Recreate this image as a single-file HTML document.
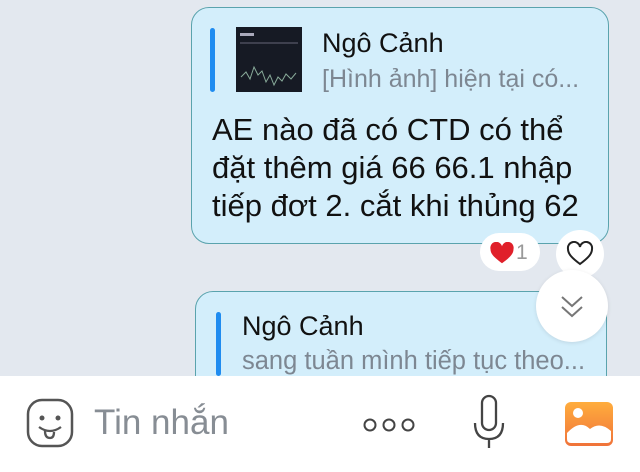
<!DOCTYPE html>
<html><head><meta charset="utf-8"><style>
body{margin:0;width:640px;height:472px;overflow:hidden;background:#e3e8ef;font-family:"Liberation Sans",sans-serif;position:relative}
.b{position:absolute;background:#d3eefb;border:1.5px solid #5aa3ad;border-radius:18px;box-sizing:border-box}
.bar{position:absolute;width:5px;background:#1f8cf0;border-radius:3px}
.t{position:absolute;white-space:nowrap}
</style></head><body>
<div class="b" style="left:191px;top:7px;width:418px;height:237px"></div>
<div class="bar" style="left:210px;top:28px;height:64px"></div>
<div style="position:absolute;left:236px;top:27px;width:66px;height:65px;background:#161a24">
<svg width="66" height="65"><polyline points="5,50 10,45 14,52 18,40 22,48 26,44 30,55 34,48 38,58 42,50 46,54 50,47 55,52 60,46" fill="none" stroke="#8a9" stroke-width="1"/><line x1="4" y1="16" x2="62" y2="16" stroke="#667" stroke-width="1"/><rect x="4" y="6" width="14" height="3" fill="#aab"/></svg></div>
<div class="t" style="left:322px;top:28px;font-size:27px;color:#111">Ngô Cảnh</div>
<div class="t" style="left:322px;top:65px;font-size:25px;color:#7d8792">[Hình ảnh] hiện tại có...</div>
<div class="t" style="left:212px;top:111px;font-size:31px;line-height:38px;color:#111">AE nào đã có CTD có thể<br>đặt thêm giá 66 66.1 nhập<br>tiếp đơt 2. cắt khi thủng 62</div>
<div style="position:absolute;left:480px;top:233px;width:60px;height:38px;border-radius:19px;background:#fff"></div>
<svg style="position:absolute;left:489px;top:242px" width="26" height="23" viewBox="0 0 28 26"><path d="M14 24 C6 18 1 14 1 8 A6.5 6.5 0 0 1 14 5 A6.5 6.5 0 0 1 27 8 C27 14 22 18 14 24Z" fill="#e0202a"/></svg>
<div class="t" style="left:516px;top:241px;font-size:21px;color:#999">1</div>
<div style="position:absolute;left:556px;top:230px;width:48px;height:48px;border-radius:24px;background:#fff"></div>
<svg style="position:absolute;left:566px;top:241px" width="28" height="26" viewBox="0 0 28 26"><path d="M14 23 C6 17 2 13 2 8 A6 6 0 0 1 14 6 A6 6 0 0 1 26 8 C26 13 22 17 14 23Z" fill="none" stroke="#222" stroke-width="2"/></svg>
<div class="b" style="left:195px;top:291px;width:412px;height:120px"></div>
<div class="bar" style="left:216px;top:312px;height:64px"></div>
<div class="t" style="left:242px;top:311px;font-size:27px;color:#111">Ngô Cảnh</div>
<div class="t" style="left:242px;top:347px;font-size:25.5px;color:#7d8792">sang tuần mình tiếp tục theo...</div>
<div style="position:absolute;left:536px;top:270px;width:72px;height:72px;border-radius:36px;background:#fff;box-shadow:0 1px 4px rgba(0,0,0,.1)"></div>
<svg style="position:absolute;left:558px;top:293px" width="28" height="28" viewBox="0 0 28 28"><path d="M4 4 L14 13 L24 4 M4 14 L14 23 L24 14" fill="none" stroke="#777" stroke-width="2"/></svg>
<div style="position:absolute;left:0;top:376px;width:640px;height:96px;background:#fff"></div>
<svg style="position:absolute;left:25px;top:397px" width="50" height="52" viewBox="0 0 50 52"><rect x="3" y="3" width="44" height="46" rx="14" fill="none" stroke="#555" stroke-width="2.5"/><circle cx="17" cy="21" r="2.5" fill="#555"/><circle cx="33" cy="21" r="2.5" fill="#555"/><path d="M14 30 Q25 38 36 30 M20 34 Q20 41 25 41 Q29 41 29 35" fill="none" stroke="#555" stroke-width="2.3"/></svg>
<div class="t" style="left:94px;top:403px;font-size:35px;color:#878d94">Tin nhắn</div>
<svg style="position:absolute;left:362px;top:416px" width="54" height="18"><circle cx="8" cy="9" r="5.5" fill="none" stroke="#444" stroke-width="2"/><circle cx="27" cy="9" r="5.5" fill="none" stroke="#444" stroke-width="2"/><circle cx="46" cy="9" r="5.5" fill="none" stroke="#444" stroke-width="2"/></svg>
<svg style="position:absolute;left:470px;top:393px" width="38" height="58" viewBox="0 0 38 58"><rect x="12" y="3" width="14" height="34" rx="7" fill="none" stroke="#444" stroke-width="2.3"/><path d="M5 30 Q5 46 19 46 Q33 46 33 30 M19 46 V55" fill="none" stroke="#444" stroke-width="2.3"/></svg>
<svg style="position:absolute;left:564px;top:401px" width="50" height="46" viewBox="0 0 50 46"><defs><linearGradient id="g" x1="0" y1="0" x2="0" y2="1"><stop offset="0" stop-color="#ffad3d"/><stop offset="1" stop-color="#f0733a"/></linearGradient></defs><rect x="1" y="1" width="48" height="44" rx="6" fill="url(#g)"/><circle cx="14" cy="12" r="5" fill="#fff"/><path d="M3 38 L3 32 Q16 18 26 28 Q36 20 47 30 L47 38 Q47 42 43 42 L7 42 Q3 42 3 38Z" fill="#fff"/></svg>
</body></html>
